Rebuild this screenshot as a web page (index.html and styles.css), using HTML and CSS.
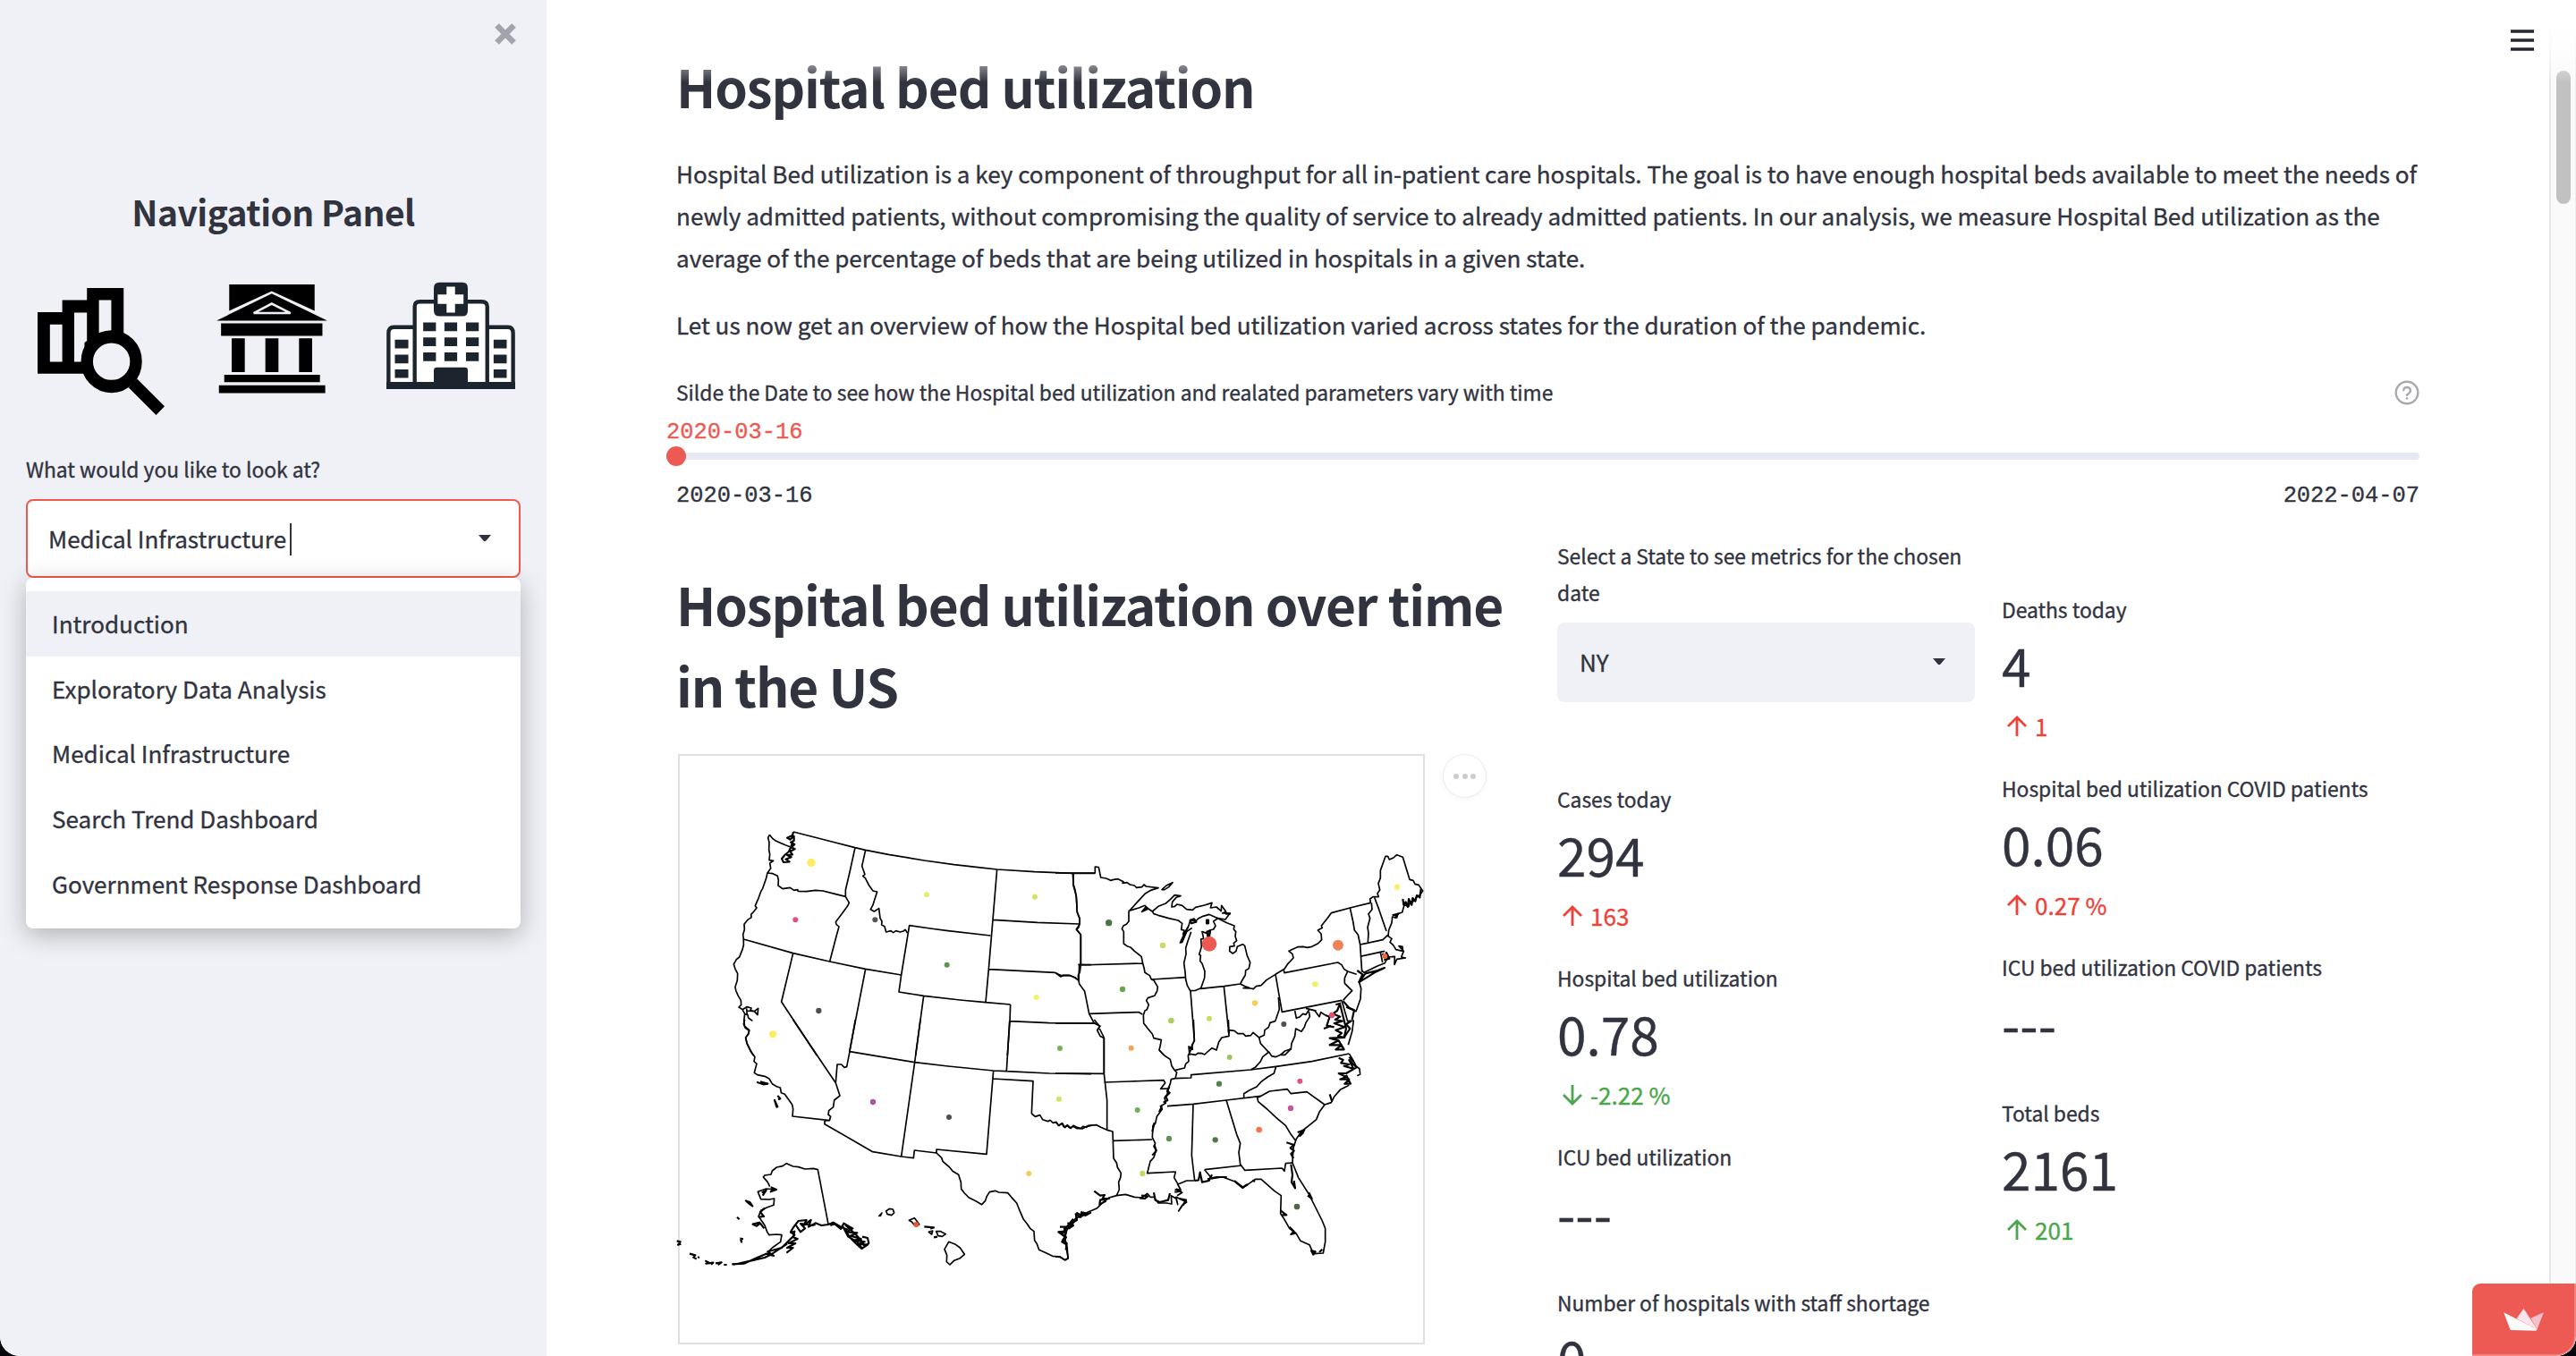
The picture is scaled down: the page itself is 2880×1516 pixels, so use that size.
FILE: index.html
```html
<!DOCTYPE html>
<html lang="en">
<head>
<meta charset="utf-8">
<title>Hospital bed utilization</title>
<link rel="stylesheet" href="styles.css">
</head>
<body>
<div class="app">
  <aside class="sidebar">
    <button class="close" aria-label="Close"><svg viewBox="0 0 26 26"><path d="M3.5 3.5L22.500 22.500M22.500 3.5L3.5 22.500"/></svg></button>
    <h2 class="nav-title">Navigation Panel</h2>
    <div class="nav-icons">
      <svg class="icon-search" viewBox="107 765 360 337" preserveAspectRatio="none">
        <path fill-rule="evenodd" d="M107 829H177V797H247V765H351V890L300 992H107ZM142 862V961H177V862ZM211 830V961H240V910L247 905V830ZM281 797V885H316V797Z"/>
        <ellipse class="lens" cx="316.500" cy="960" rx="69.500" ry="66"/>
        <path d="M389 1006L467 1079 443 1102 365 1029Z"/>
      </svg>
      <svg class="icon-bank" viewBox="613 756 313 289" preserveAspectRatio="none">
        <path d="M649 756H890V826L769 774 649 826ZM613 852L769 780 926 852ZM626 859H912V892H626ZM656 899H693V988H656ZM751 899H788V988H751ZM846 899H883V988H846ZM635 995H905V1015H635ZM620 1023H920V1044H620Z"/>
        <path class="bank-line" d="M718 832L769 807 822 832Z"/>
      </svg>
      <svg class="icon-hospital" viewBox="1093 749 364 286" preserveAspectRatio="none">
        <path class="wall" d="M1099 1025V886Q1099 870 1115 870H1173V815Q1173 802 1187 802H1362Q1378 802 1378 815V870H1436Q1451 870 1451 886V1025ZM1173 870V1025M1378 870V1025"/>
        <path class="dark" d="M1093 1016H1457V1035H1093ZM1227 1030V985Q1227 977 1236 977H1315Q1323 977 1323 985V1030ZM1243 751H1308Q1323 751 1323 766V826Q1323 841 1308 841H1243Q1227 841 1227 826V766Q1227 751 1243 751Z"/>
        <path class="windows" d="M1197 869H1233M1257 869H1293M1318 869H1354M1197 909H1233M1257 909H1293M1318 909H1354M1197 949H1233M1257 949H1293M1318 949H1354M1117 915H1155M1117 955H1155M1117 994H1155M1396 915H1433M1396 955H1433M1396 994H1433"/>
        <path class="cross" d="M1263 762H1287V783H1311V808H1287V831H1263V808H1238V783H1263Z"/>
      </svg>
    </div>
    <label class="label nav-label">What would you like to look at?</label>
    <div class="select focused"><span>Medical Infrastructure<i class="caret"></i></span><svg class="arrow" viewBox="0 0 14 8"><path d="M0 0H14L8.500 6.500Q7 8 5.500 6.500Z"/></svg>
      <ul class="menu">
        <li class="active">Introduction</li>
        <li>Exploratory Data Analysis</li>
        <li>Medical Infrastructure</li>
        <li>Search Trend Dashboard</li>
        <li>Government Response Dashboard</li>
      </ul>
    </div>
  </aside>

  <main class="main">
    <h1>Hospital bed utilization</h1>
    <p class="text">Hospital Bed utilization is a key component of throughput for all in-patient care hospitals. The goal is to have enough hospital beds available to meet the needs of<br>newly admitted patients, without compromising the quality of service to already admitted patients. In our analysis, we measure Hospital Bed utilization as the<br>average of the percentage of beds that are being utilized in hospitals in a given state.</p>
    <p class="text">Let us now get an overview of how the Hospital bed utilization varied across states for the duration of the pandemic.</p>
    <div class="slider-head">
      <label class="label">Silde the Date to see how the Hospital bed utilization and realated parameters vary with time</label>
      <svg class="help" viewBox="0 0 28 28"><circle cx="14" cy="14" r="12.300"/><path d="M10.200 11a3.900 3.900 0 0 1 7.700 1c0 2.600-3.900 3.400-3.900 4.800"/><path d="M14 20.300v.2"/></svg>
    </div>
    <div class="slider-value">2020-03-16</div>
    <div class="track"><i class="thumb"></i></div>
    <div class="slider-range"><span>2020-03-16</span><span>2022-04-07</span></div>

    <div class="columns">
      <section class="col-map">
        <h1>Hospital bed utilization over time in the US</h1>
        <div class="chart">
          <svg class="map" viewBox="759 844 833 658">
            <!-- Northwest -->
            <g transform="translate(740 840) scale(.33333)">
              <path d="M441 270L500 285 570 303 648 323 683 331 760 346 880 366 980 380 1060 389 1124 396 1250 404 1378 409H1453"/>
              <path d="M361 280L372 293 380 299 400 308 416 315 430 320M361 280L356 290 360 305 359 330 362 345 360 365 374 367 362 375 365 392 354 408 372 410 388 418 391 432 390 450 405 461 430 457 443 466 455 464 457 469 485 470 515 466 540 468 580 478 616 487"/>
              <path class="dense" d="M441 270L438 282 420 290 430 296 443 285 443 300 432 305 445 312 434 322 446 328 430 335 438 346 420 348 434 355 415 362 428 370 408 372 402 360 412 348 426 336 433 320 440 300"/>
              <path d="M648 323L630 405 616 465V487L628 508 622 520 605 543 583 572 585 580 594 588 585 620 563 705M354 408L350 425 338 460 332 470 325 490 313 518 318 525 306 540 299 547 300 557 288 565 276 580 277 598 272 615 274 630 440 677 563 705 683 730 803 750"/>
              <path d="M274 630L274 650 270 665 260 690 250 698 241 714 246 730 254 745 253 768 246 790 248 802 256 820 265 835 266 850 258 858 270 866 278 880 275 905 278 922 293 935 290 948 281 960 285 980 297 1005 307 1020M270 866L285 857 300 861 297 869 310 872 323 862 321 884 310 872 284 870M276 880L288 884 290 894 304 904M284 862L286 884"/>
              <path d="M440 677L401 840 520 1020M683 730L629 1008M683 331L671 385 681 413 674 418 682 425 695 450 708 468 722 471 712 502 708 515 700 530 712 537 728 527 732 560 738 570 737 582 747 587 752 606 768 602 776 608 785 602 799 606 810 603 816 598 824 610"/>
              <path d="M803 750L830 584 900 594 960 602 1102 618M803 750L795 807 878 820 1000 834 1086 842 1169 849M1124 396L1110 565 1096 731 1086 842M878 820L851 1020M1110 565L1260 574 1400 579M1169 849L1167 905 1159 1020M1167 905L1300 911 1455 912M1096 731L1320 742 1330 750 1338 756 1347 751 1370 752 1385 759 1398 768"/>
              <path d="M1378 409L1380 445 1386 465 1390 490 1393 540 1401 560V578L1398 590 1391 598 1405 615V715L1402 740 1396 752 1398 768M1396 715L1440 716"/>
            </g>
            <!-- Northeast -->
            <g transform="translate(1180 840) scale(.33333)">
              <path d="M0 408H133V387L145 389 152 423 170 426 185 433 195 430 210 428 228 437 225 442 240 440 250 447 265 450 272 457 290 455 297 447 304 453 345 458 320 466 300 478 275 505 250 533M357 464L372 450 393 440 380 455 366 464Z"/>
              <path d="M246 535V570L238 580 228 585 223 595 229 605V645L240 653 253 658 265 670 288 688 293 711 78 717M293 711L298 730 300 742 316 752 322 765 330 768 343 790 341 804 332 820 310 827 305 836 313 850 307 866 300 870 295 885 296 912 310 930 325 948 330 962 355 968 352 985 348 1002 365 1020"/>
              <path d="M246 535L280 525 300 517 312 528 290 538 303 522 325 537 330 545 345 550 380 560 412 567 425 577 422 598 432 600 428 614 436 605 445 590 453 565 470 570 480 560 495 553 515 547 545 560 570 564 585 543 560 543 572 538 557 517 556 536 540 522 520 525 525 508 500 516 470 523 460 532 440 530 425 517 408 513 400 520 390 522 392 505 405 490 420 485 400 482 385 497 370 510 345 520 325 537"/>
              <path class="dense" d="M507 566H513V577H507ZM452 567L465 562 472 572 456 577ZM570 545L588 544M292 535L308 526"/>
              <path d="M458 592L440 605 425 640 418 642 432 612 445 588M455 605L443 640 437 660 438 680 431 710 435 740 437 765 442 785 452 803 470 802 488 794 500 760 501 738 492 712 485 703 487 685 482 682 490 655 488 630 497 628 492 605 508 610 514 632 517 600 530 597 537 585 530 570 545 560"/>
              <path class="dense" d="M508 605L515 630 519 602Z"/>
              <path d="M540 558L575 575 600 585 598 597 605 605 603 620 608 635 598 643 600 653 585 655 584 670 595 678 606 670 610 655 628 647 635 652 643 685 653 708 649 728 638 735 637 750 628 765 620 780 565 788 485 796M322 765L437 758M453 804L466 970 458 985 460 1000 447 990 450 1020M565 788L582 950"/>
              <path d="M620 780L636 788 650 793 630 794 655 795 664 797 673 788 690 785 708 767 738 748 768 730 780 712 798 693 795 680 783 670 812 656 830 655 845 658 860 655 880 645 893 632 891 612 880 600 895 592 892 585 912 560 925 542 988 525 1057 508 1055 495 1065 488 1084 488 1080 476 1088 465 1083 443 1090 425 1090 400 1107 352 1115 352 1120 363 1135 356 1145 347 1165 355 1188 430 1200 433 1206 445 1218 448 1232 468 1222 482 1210 490 1203 502 1190 505 1185 520 1170 515 1163 540 1148 545 1145 558 1130 555 1128 575 1118 600 1116 620 1128 628 1122 640 1133 650 1142 665 1165 670 1164 655 1152 653 1168 670 1160 690 1174 693 1145 697 1137 715 1138 688 1115 690 1105 710 1080 720 1035 742 1028 735"/>
              <path class="dense" d="M1165 495L1168 515 1175 505 1182 522 1185 495 1195 515 1198 492 1207 503 1212 483 1222 490 1226 462M1130 550L1150 545 1138 560M1097 678L1105 690 1110 675 1120 695 1102 700M1020 770L1040 745 1080 735 1104 726 1070 742 1050 755 1018 774 1030 748 1012 735"/>
              <path d="M78 768L80 780 98 805 103 830 107 850 113 880 130 912 150 922 140 935 150 955 163 962V1080M115 880L200 877 280 875 292 882M0 743L20 752 45 751 65 758 78 768 80 715M60 409L60 450 70 485 73 540 81 560V580L70 597 85 615V715M738 748L760 874 960 835M765 730L768 743 947 708 960 716 968 730 980 738 970 760V778L995 803 978 820 965 835M980 738L1010 748M1018 772L1025 795 1023 830 1012 862 1008 872 998 868 975 858"/>
              <path d="M988 525L998 570 1003 600 1015 615 1022 648 1028 740M1022 648L1098 632 1115 616M1022 688L1090 673 1105 670M1090 673L1097 708M1060 508L1062 530 1050 545 1055 560 1047 590 1050 610 1048 640M1070 490L1085 530 1110 603"/>
              <path d="M580 935L600 937 612 947 630 947 638 955 655 953 663 943 683 960 688 980 702 995 716 1010M748 825L751 865 737 905 720 910 715 925 702 935 700 952 683 960M803 870L808 895 820 890 830 880 840 883 852 865 870 870 885 890 890 875 905 885M850 873L853 890 840 910 835 925 825 940 806 930 803 955 792 980 790 998 770 1005 755 1018M960 835L980 905 1000 903 995 940 982 985M840 862L875 870"/>
              <path class="dense" d="M965 838L985 860 1002 868 995 900M940 850L955 845 945 870 930 880 955 890 938 900 962 905 935 912 970 925 940 935 960 945 948 955 970 960 920 962 950 970 920 985 960 985 940 1000 968 1000 950 970M905 885L920 890 910 920 935 925M900 930L925 920M955 850L975 930 968 960 988 930 975 915 992 905"/>
            </g>
            <!-- Southwest, Alaska and Hawaii -->
            <g transform="translate(740 1140) scale(.33333)">
              <path d="M278 0L274 15 280 28 293 37 290 48 281 60 285 78 300 108 312 125 309 140 318 148 310 178 320 185 345 190 360 198 370 215 385 224 397 228 400 245 412 250 425 268 437 285 440 300 438 324 562 338 566 325 558 318 560 305 575 293 578 270 597 255 583 212 588 150 602 150 612 160 620 158 630 107 649 0M440 0L583 212M630 107L720 122 848 143 960 156 1112 171 1155 173 1300 180 1440 182M562 338L546 339V350L707 443 803 459 844 464 847 438 921 447M867 0L848 143 803 459M921 447V435L1089 451 1112 171M1110 198L1245 206 1240 315M1166 5L1156 173"/>
              <path d="M1240 315L1252 325 1268 320 1277 335 1295 341 1302 337 1312 346 1323 343 1330 355 1343 347 1352 362 1360 353 1372 364 1380 355 1395 362 1410 366 1425 358 1440 355"/>
              <path d="M921 447L938 463 942 475 965 495 975 508 995 520 1003 545 1004 568 1015 582 1030 597 1050 607 1073 620 1085 607 1090 592 1099 578 1118 574 1130 579 1160 581 1172 595 1190 615 1200 640 1212 668 1225 685 1235 700 1248 710 1250 740 1258 752 1265 772 1290 783 1310 793 1335 795 1352 806 1363 800 1357 770"/>
              <path class="dense" d="M1355 772L1358 750 1344 740 1356 730 1334 712 1355 715 1350 700 1368 698 1375 682 1392 672 1388 652 1405 662 1408 645 1420 657 1440 646M318 209L340 217 355 215 330 208M388 255L397 265 390 268M378 270L385 293 388 292Z"/>
              <path d="M558 685L523 503 508 499 480 501 458 494 440 492 418 482 405 491 385 495 370 507 366 519 345 522 340 528 355 545 362 560M382 570L350 567 322 577 332 602 360 603 377 600 375 622 352 630 332 640 324 660 335 675 345 690 353 712 360 722 385 720 402 722 398 745 370 765 355 780"/>
              <path class="dense" d="M365 562L384 570 365 577 375 565M330 680L305 686 318 692 330 683 343 700M326 662L342 660 330 645 345 632M335 580L350 572 338 590M280 605L290 615 304 625 295 612 283 608M252 662L260 670M262 734L270 735 265 740 268 748M50 742L62 745 54 755 64 752M93 785L112 790 106 797 116 803M120 796L126 798M145 808L158 815 148 818 172 815 165 821M180 817L200 814 188 822M208 822H218M235 820L275 818 320 798 350 785 375 792 355 778 402 765 425 742 445 722 432 712 440 698 458 675 485 672 475 690 500 672 492 695 515 682 535 690 558 687 575 680 600 695 625 705M240 822L300 808 345 798 370 785 420 752M430 715L445 710 440 730 455 735 425 750 448 750 420 765 440 765 418 782M450 690L465 712 480 700 465 684 505 690 515 687M565 690L580 685 600 702 610 683 640 700 620 712 655 715 632 725 668 735 645 740 680 745 660 752 690 755 670 768 650 750 630 730 612 700M605 690L625 728 655 745 672 768M672 728L690 732 694 750 680 760 668 740 650 720 615 688"/>
              <path d="M752 642L763 634 775 636 779 648 770 656 756 652ZM829 673L847 665 855 675 863 687 848 690 838 678ZM948 770L962 745 985 754 1000 765 1015 787 1000 800 980 808 966 822 955 812 956 790ZM920 710L935 710 952 719 940 727 927 725ZM727 660L738 648 732 660M895 712L908 708 905 720Z"/>
              <path class="dense" d="M880 694L912 697 900 700M912 730L924 728"/>
            </g>
            <!-- Southeast -->
            <g transform="translate(1180 1140) scale(.33333)">
              <path d="M0 12H130M0 180L163 181M163 60V181L173 270V370M163 210L250 207 363 203 368 212 353 232 380 231M0 343L12 355 22 348 28 360 40 356 48 363 60 358 72 365 85 365 92 358 105 361 110 355 138 353 152 361 173 370 192 375 195 465 205 480 208 495 220 515 218 530 212 545 214 570 205 590M195 406L325 402M375 290L462 283 573 270 690 256"/>
              <path d="M365 120L385 133 390 155 400 170 433 162 437 148 447 140 445 120 455 100 450 90M400 170L407 177 402 197 455 195V185L655 168 740 157 860 140 985 114M402 197L388 200 385 215 378 232 375 250 366 262 370 280 352 290 358 300 340 325 335 348 327 355 325 395 335 415 330 425 338 437 330 462 318 475 308 515 403 510 398 530 410 550"/>
              <path class="dense" d="M382 225L375 240 383 245 370 258 376 270 362 278M357 290L348 310M332 345L325 375M332 420L338 440 325 455"/>
              <path d="M365 120L348 102M452 115L470 118 478 112 492 113 500 117 510 108 525 95 540 102 548 75 558 60 582 55 580 33M716 108L725 122 738 125 755 118 770 118 790 98M716 108L695 125 688 140 670 160 655 168M740 157L733 180 712 192 690 208 675 225 650 237 632 248V262M690 256L677 262 680 275 710 300 740 328 772 355 790 385 805 405M690 256L718 240 778 233 790 248 843 242 903 285M573 270L608 385 620 415 615 445 620 485 635 505 760 498 768 508 772 482 795 480M462 283L457 455 467 540M500 503L625 489"/>
              <path d="M985 114L995 130 1008 155 1020 165 1022 183 1012 188M985 220L955 235 935 258 925 278 903 285 885 310 875 335 850 355 825 375 808 400 798 430 795 480 815 530 850 585 895 675 905 700V745L898 783 865 785 852 755 822 742 808 718 785 700 765 665 755 650 757 590 735 575 690 535 670 535 628 565 600 542 560 527 525 533 510 515 500 503"/>
              <path class="dense" d="M950 128L965 135 958 145 985 150 968 155 1000 165 985 135 1010 160 975 180 950 180 975 192 955 200 985 200 970 215 990 215 975 185M1000 140L985 125M920 250L928 275M812 378L835 370 820 390 832 378M775 412L800 420 788 430 800 440 790 450 798 465M790 485L795 520 792 545 804 565 800 540M846 590L860 600 850 580M755 640L775 655 760 655M785 695L800 710 790 720 808 715M858 775L865 788 872 778ZM895 770L885 780M525 520L515 540 492 545 485 512 480 538 467 540M510 535L540 528 575 528M600 540L628 562 645 552M660 540L670 542"/>
              <path d="M205 590L235 586 265 595 290 597 308 583 318 595 330 595 345 615 372 615 390 618 388 590 405 600 410 620 405 595 440 612 425 622 413 642 428 620M467 540L440 540 420 548 410 552 420 570 402 570 425 580 408 590M205 590L180 597 160 612 140 632 110 645 70 665 45 690 35 715 33 740 40 772 42 800 32 806 15 796 0 795"/>
              <path class="dense" d="M130 575L150 590 165 588 158 600 180 600 150 605 148 620 170 608M70 647L85 655 95 647 105 650 80 662 88 648M15 695L40 695 28 710 10 712 32 728 22 745 38 755M40 682L60 690 45 700 68 670M60 668L38 695 30 735 40 770M288 590L310 592 300 600 282 598M330 580L335 605 350 612 378 605 384 582M405 568L420 575 400 578M415 600L438 605 428 622"/>
              <path d="M580 0L582 45M463 0L466 70 452 100M148 30L163 60M130 0L148 22 142 34"/>
            </g>
            <g transform="translate(740 840) scale(.33333)" class="dots">
              <circle cx="501" cy="373" r="14" fill="#fdec62"/><circle cx="448" cy="565" r="9" fill="#df527d"/><circle cx="715" cy="565" r="9" fill="#555"/><circle cx="888" cy="481" r="9" fill="#e2ee68"/><circle cx="1251" cy="488" r="9" fill="#cfe65f"/><circle cx="956" cy="716" r="9" fill="#5e9250"/><circle cx="526" cy="870" r="9.500" fill="#4f4f4f"/><circle cx="372" cy="949" r="12" fill="#fdec62"/><circle cx="1256" cy="825" r="9" fill="#eff26b"/><circle cx="1335" cy="996" r="9" fill="#78b052"/>
              <circle cx="708" cy="1176" r="9.500" fill="#b4509d"/><circle cx="963" cy="1227" r="9" fill="#4f4f4f"/><circle cx="1332" cy="1166" r="9" fill="#cfe65f"/><circle cx="1231" cy="1416" r="9" fill="#fac75e"/><circle cx="853" cy="1587" r="9" fill="#e8552f"/>
              <circle cx="1499" cy="575" r="11" fill="#4f7048"/><circle cx="1680" cy="651" r="9.500" fill="#c4df5e"/><circle cx="1836" cy="646" r="25" fill="#ee5853"/><circle cx="2268" cy="650" r="18" fill="#f08356"/><circle cx="2425" cy="687" r="9" fill="#f0673a"/><circle cx="2466" cy="455" r="9.500" fill="#fcf062"/><circle cx="2191" cy="781" r="9.500" fill="#f0f161"/><circle cx="1545" cy="798" r="9.500" fill="#68a550"/><circle cx="1708" cy="903" r="10" fill="#a7d05d"/><circle cx="1836" cy="896" r="9" fill="#c4df5e"/><circle cx="1989" cy="844" r="9.500" fill="#fbcb5b"/><circle cx="2086" cy="915" r="9" fill="#4f4f4f"/><circle cx="2247" cy="885" r="9.500" fill="#e94c69"/><circle cx="1574" cy="995" r="9" fill="#f4a352"/>
              <circle cx="1904" cy="1026" r="9" fill="#9ac85c"/><circle cx="1869" cy="1115" r="9.500" fill="#56834d"/><circle cx="2140" cy="1106" r="9" fill="#df527d"/><circle cx="2109" cy="1197" r="9.500" fill="#c5549c"/><circle cx="1595" cy="1203" r="9" fill="#72ad57"/><circle cx="2003" cy="1269" r="10" fill="#f2784e"/><circle cx="1701" cy="1299" r="9.500" fill="#5e9250"/><circle cx="1856" cy="1303" r="9.500" fill="#4f7748"/><circle cx="1612" cy="1416" r="9.500" fill="#bcdc5e"/><circle cx="2130" cy="1527" r="10" fill="#4f6648"/>
            </g>
          </svg>
          <span class="chart-menu"><i></i><i></i><i></i></span>
        </div>
      </section>

      <section class="col-a">
        <label class="label">Select a State to see metrics for the chosen date</label>
        <div class="select"><span>NY</span><svg class="arrow" viewBox="0 0 14 8"><path d="M0 0H14L8.500 6.500Q7 8 5.500 6.500Z"/></svg></div>
        <div class="metrics">
          <div class="metric"><div class="label">Cases today</div><div class="value">294</div><div class="delta bad"><svg viewBox="0 0 24 24"><path d="M12 23V2M2 12L12 2 22 12"/></svg>163</div></div>
          <div class="metric"><div class="label">Hospital bed utilization</div><div class="value">0.78</div><div class="delta good"><svg viewBox="0 0 24 24"><path d="M12 1V22M2 12L12 22 22 12"/></svg>-2.22 %</div></div>
          <div class="metric"><div class="label">ICU bed utilization</div><div class="value">---</div></div>
          <div class="metric"><div class="label">Number of hospitals with staff shortage</div><div class="value">0</div></div>
        </div>
      </section>

      <section class="col-b">
        <div class="metrics">
          <div class="metric"><div class="label">Deaths today</div><div class="value">4</div><div class="delta bad"><svg viewBox="0 0 24 24"><path d="M12 23V2M2 12L12 2 22 12"/></svg>1</div></div>
          <div class="metric"><div class="label">Hospital bed utilization COVID patients</div><div class="value">0.06</div><div class="delta bad"><svg viewBox="0 0 24 24"><path d="M12 23V2M2 12L12 2 22 12"/></svg>0.27 %</div></div>
          <div class="metric"><div class="label">ICU bed utilization COVID patients</div><div class="value">---</div></div>
          <div class="metric"><div class="label">Total beds</div><div class="value">2161</div><div class="delta good"><svg viewBox="0 0 24 24"><path d="M12 23V2M2 12L12 2 22 12"/></svg>201</div></div>
        </div>
      </section>
    </div>
  </main>

  <div class="scrollbar"><i></i></div>
  <div class="fade"></div>
  <svg class="burger" viewBox="0 0 26 24"><path d="M0 2H26M0 12H26M0 22H26"/></svg>
  <div class="badge"><svg viewBox="297 188 136 76"><path fill="#fce4ea" d="M365 188L411 259 341 222Z"/><path fill="#f7c1cb" d="M433 201L389 221 411 259Z"/><path fill="#fffdfb" d="M297 201L411 259 407 263 320 261Z"/></svg></div>
</div>
</body>
</html>
```
FILE: styles.css
```css
* { box-sizing: border-box; }
html { background: #06070c; }
body {
  margin: 0;
  font-family: "Noto Sans CJK SC", "Noto Sans", sans-serif;
  font-size: 26.05px;
  line-height: 47px;
  color: #31333f;
  -webkit-text-stroke: .35px currentColor;
}
h1, h2, p, ul { margin: 0; padding: 0; }
h1, h2 { -webkit-text-stroke: 0; }
button { border: 0; padding: 0; background: none; }
svg { display: block; flex: none; }

.app {
  position: relative;
  display: flex;
  width: 2880px;
  height: 1516px;
  overflow: hidden;
  background: #fff;
  border-radius: 0 0 22px 22px;
}

/* Sidebar */
.sidebar {
  flex: none;
  width: 611px;
  padding: 25px 29px 0 29px;
  background: #f0f1f6;
}
.close { display: block; width: 26px; height: 26px; margin: 0 4px 0 auto; }
.close path { stroke: #a3a4ab; stroke-width: 6.5; }
.nav-title {
  margin-top: 155px;
  text-align: center;
  font-size: 39px;
  line-height: 60px;
  letter-spacing: -.55px;
}
.nav-icons { display: flex; height: 150px; margin: 49px 0 0 13px; }
.icon-search { width: 142px; height: 142px; margin-top: 7px; }
.lens { fill: #f0f1f6; stroke: #000; stroke-width: 34; }
.icon-bank { width: 124px; height: 122px; margin: 3px 0 0 58px; }
.bank-line { fill: none; stroke: #f0f1f6; stroke-width: 6; }
.icon-hospital { width: 144px; height: 120px; margin-left: 66px; }
.wall { fill: #fff; stroke: #1c242d; stroke-width: 11; }
.dark { fill: #1c242d; }
.windows { stroke: #1c242d; stroke-width: 23; }
.cross { fill: #fff; }
.label { display: block; font-size: 22.8px; line-height: 41px; }
.nav-label { margin-top: 39px; }

.select {
  position: relative;
  display: flex;
  align-items: center;
  justify-content: space-between;
  height: 89px;
  margin-top: 13px;
  padding: 0 33px 1px 25px;
  border-radius: 8px;
  background: #f0f1f6;
}
.arrow { width: 14px; height: 8px; fill: #31333f; }
.focused {
  height: 88px;
  padding: 0 31px 0 23px;
  border: 2.500px solid #ed5a53;
  background: #fff;
  line-height: 48px;
}
.caret {
  display: inline-block;
  width: 1.500px;
  height: 36px;
  margin-left: 4px;
  vertical-align: -8px;
  background: #31333f;
}
.menu {
  position: absolute;
  left: -2px;
  top: 86px;
  width: 553px;
  padding: 15px 0 13.500px;
  list-style: none;
  background: #fff;
  border-radius: 8px;
  box-shadow: 0 7px 29px rgba(0, 0, 0, .27);
}
.menu li { padding-left: 29px; line-height: 72.700px; }
.active { background: #f0f1f6; }

/* Main content */
.main { width: 2094px; padding: 50px 0 0 145px; }
h1 {
  font-size: 58.600px;
  line-height: 91px;
  letter-spacing: -1.1px;
}
.text { margin-top: 30px; white-space: nowrap; }
.text + .text { margin-top: 28px; }
.slider-head {
  display: flex;
  justify-content: space-between;
  align-items: center;
  margin-top: 31px;
}
.help { width: 28px; height: 28px; fill: none; stroke: #a8a9af; stroke-width: 2.400; stroke-linecap: round; }
.slider-value, .slider-range {
  font-family: "Liberation Mono", monospace;
  font-size: 25.400px;
  line-height: 30px;
}
.slider-value { margin: 10px 0 0 -11px; color: #ed5a53; }
.track { position: relative; height: 8px; margin-top: 7px; border-radius: 4px; background: #e6e9f1; }
.thumb { position: absolute; left: -11px; top: -7px; width: 22px; height: 22px; border-radius: 50%; background: #ed5a53; }
.slider-range { display: flex; justify-content: space-between; margin-top: 26px; }

.columns {
  display: grid;
  grid-template-columns: 955px 467px 467px;
  column-gap: 30px;
  margin-top: 31px;
}
.col-map { padding-top: 28px; }
.chart {
  position: relative;
  width: 835px;
  height: 660px;
  margin: 32px 0 0 2px;
  border: 2px solid #e0e0e0;
}
.map { width: 833px; height: 658px; margin: -1px; overflow: visible; }
.map path { fill: none; stroke: #000; stroke-width: 5; stroke-linejoin: round; }
.map .dense { stroke-width: 6.5; }
.chart-menu {
  position: absolute;
  left: 853px;
  top: -2px;
  display: flex;
  align-items: center;
  justify-content: center;
  gap: 3.500px;
  width: 49px;
  height: 49px;
  border: 1px solid #eaeaea;
  border-radius: 50%;
  box-shadow: 0 2px 6px rgba(0, 0, 0, .04);
}
.chart-menu i { width: 6px; height: 6px; border-radius: 50%; background: #ccc; }
.metrics { display: grid; row-gap: 27px; }
.col-a .metrics { margin-top: 88px; }
.col-b .metrics { margin-top: 60px; }
.metric { min-height: 136px; }
.value { margin-top: 4px; font-size: 58.600px; line-height: 73px; }
.delta { display: flex; align-items: center; margin-top: 11px; line-height: 44px; }
.delta svg { width: 24px; height: 24px; margin: 0 8px 0 5px; fill: none; stroke: currentColor; stroke-width: 2.800; }
.bad { color: #ee4238; }
.good { color: #4ba64b; }

/* Window chrome */
.scrollbar {
  position: absolute;
  right: 0;
  top: 0;
  width: 30px;
  height: 1516px;
  padding: 79px 0 0 6px;
  border-left: 2px solid #e8e8e8;
  border-right: 1px solid #ededed;
  background: #fafafa;
}
.scrollbar i { display: block; width: 16px; height: 149px; border-radius: 8px; background: #c1c1c1; }
.fade {
  position: absolute;
  left: 611px;
  right: 0;
  top: 0;
  height: 92px;
  background: linear-gradient(#fff 25px, rgba(255, 255, 255, .6) 65px, rgba(255, 255, 255, 0));
}
.burger { position: absolute; left: 2807px; top: 33px; width: 26px; height: 24px; stroke: #262730; stroke-width: 3.300; }
.badge {
  position: absolute;
  right: 0;
  bottom: 0;
  width: 116px;
  height: 81px;
  padding: 28px 0 0 35px;
  background: #ed5a53;
  border-right: 2px solid #f2837e;
  border-bottom: 2px solid #f2837e;
  border-radius: 9px 0 22px 0;
}
.badge svg { width: 45px; height: 25px; }
```
